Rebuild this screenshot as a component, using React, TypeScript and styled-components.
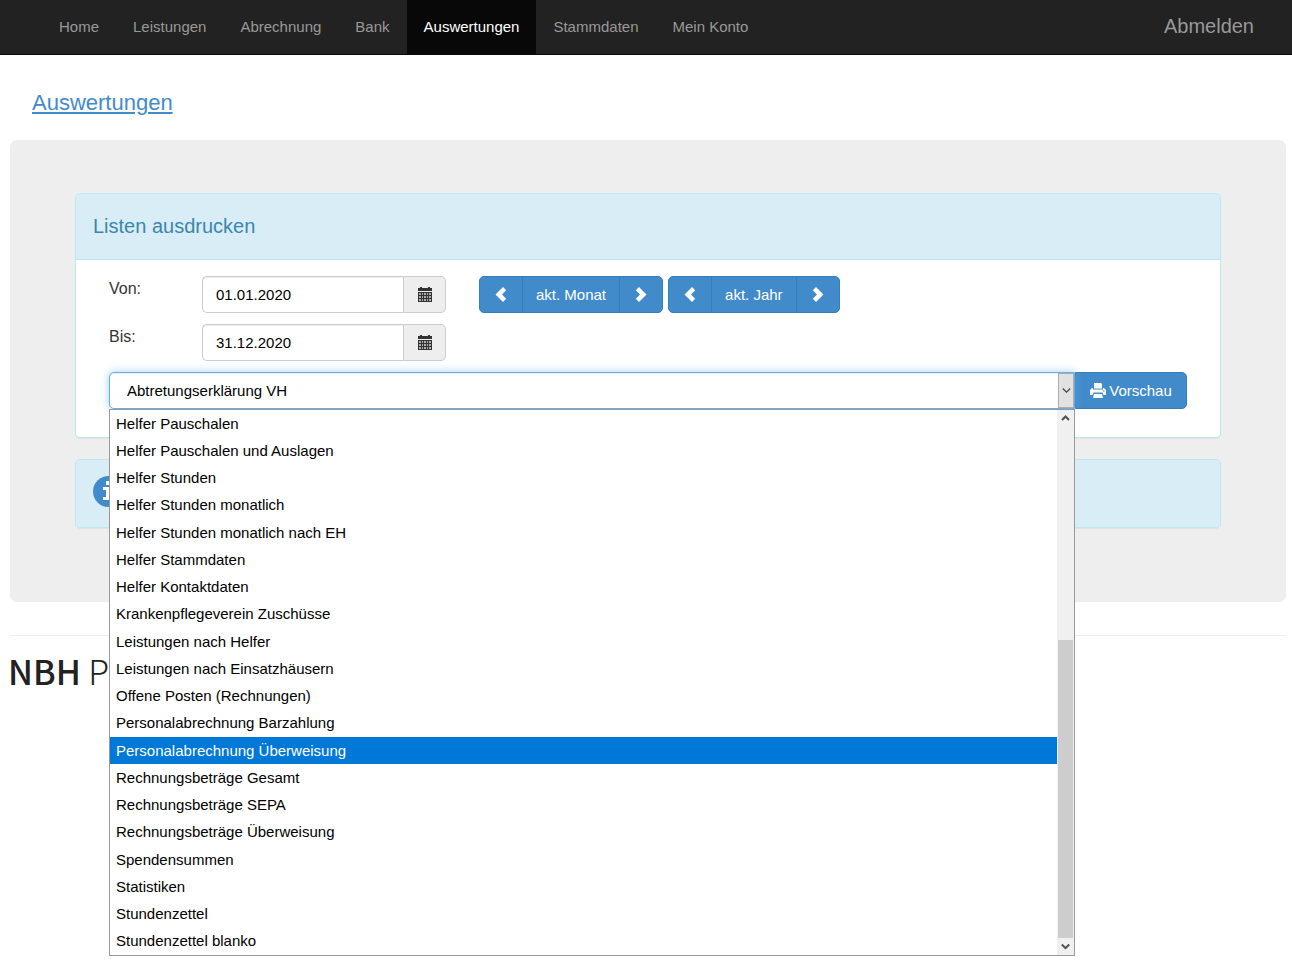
import React from "react";
import styled, { createGlobalStyle, css } from "styled-components";

const GlobalStyle = createGlobalStyle`
  *, *::before, *::after { box-sizing: border-box; }
  body {
    margin: 0;
    min-height: 100vh;
    background: #fff;
    color: #333;
    font-family: "Liberation Sans", Arial, sans-serif;
    font-size: 15px;
    line-height: 22px;
  }
  button, input, select { font-family: inherit; font-size: inherit; }
`;

const Shell = styled.div`
  min-height: 100vh;
`;

const NavBar = styled.nav`
  display: flex;
  justify-content: space-between;
  height: 55px;
  padding: 0 38px 0 42px;
  background: #222;
  border-bottom: 1px solid #080808;
`;

const NavList = styled.ul`
  display: flex;
  margin: 0;
  padding: 0;
  list-style: none;
`;

const NavLink = styled.a<{ $active?: boolean }>`
  display: block;
  padding: 16px 17px;
  color: ${(p) => (p.$active ? "#fff" : "#999")};
  background: ${(p) => (p.$active ? "#080808" : "transparent")};
  text-decoration: none;
`;

const Logout = styled.a`
  padding: 15px 0;
  color: #999;
  font-size: 20px;
  text-decoration: none;
`;

const Page = styled.div`
  padding: 0 6px 0 10px;
`;

const PageTitle = styled.h1`
  margin: 0;
  padding: 35px 22px 24px;
  font-size: 22px;
  font-weight: 400;
  line-height: 26px;
  a { color: #428bca; text-decoration: underline; }
`;

const Jumbotron = styled.main`
  padding: 53px 65px 74px;
  background: #eee;
  border-radius: 7px;
`;

const Panel = styled.section`
  background: #fff;
  border: 1px solid #bce8f1;
  border-radius: 5px;
  box-shadow: 0 1px 1px rgba(0, 0, 0, 0.05);
  & + & { margin-top: 21px; }
`;

const PanelHeading = styled.h2`
  margin: 0;
  padding: 21px 17px;
  color: #3a87ad;
  background: #d9edf7;
  border-bottom: 1px solid #bce8f1;
  border-radius: 4px 4px 0 0;
  font-size: 20px;
  font-weight: 400;
  line-height: 23px;
`;

const PanelBody = styled.form`
  display: flex;
  flex-direction: column;
  gap: 11px;
  padding: 16px 33px 28px;
`;

const InfoBox = styled.div`
  height: 67px;
  padding: 16px 17px;
  background: #d9edf7;
  border-radius: 4px;
  svg { display: block; }
`;

const FormRow = styled.div`
  display: flex;
  align-items: flex-start;
`;

const Label = styled.label`
  width: 93px;
  font-size: 16px;
  line-height: 26px;
`;

const DateGroup = styled.div`
  display: flex;
  width: 244px;
  height: 37px;
`;

const DateInput = styled.input`
  flex: 1;
  min-width: 0;
  padding: 0 13px;
  color: #000;
  background: #fff;
  border: 1px solid #ccc;
  border-right: 0;
  border-radius: 5px 0 0 5px;
  box-shadow: inset 0 1px 1px rgba(0, 0, 0, 0.075);
`;

const DateButton = styled.button`
  display: flex;
  align-items: center;
  justify-content: center;
  width: 43px;
  padding: 0;
  color: #333;
  background: #eee;
  border: 1px solid #ccc;
  border-radius: 0 5px 5px 0;
`;

const Steppers = styled.div`
  display: flex;
  gap: 5px;
  margin-left: 33px;
`;

const primary = css`
  display: flex;
  align-items: center;
  justify-content: center;
  height: 37px;
  color: #fff;
  background: #428bca;
  border: 1px solid #357ebd;
`;

const ButtonGroup = styled.div`
  display: flex;
`;

const GroupButton = styled.button<{ $icon?: boolean }>`
  ${primary}
  width: ${(p) => (p.$icon ? "44px" : "auto")};
  padding: 0 ${(p) => (p.$icon ? "0" : "13px")};
  & + & { margin-left: -1px; }
  &:first-child { border-radius: 5px 0 0 5px; }
  &:last-child { border-radius: 0 5px 5px 0; }
`;

const PreviewButton = styled.button`
  ${primary}
  gap: 3px;
  width: 112px;
  padding: 0;
  border-radius: 0 5px 5px 0;
`;

const SelectWrap = styled.div`
  position: relative;
  flex: 1;
`;

const Select = styled.select`
  display: block;
  width: 100%;
  height: 37px;
  padding: 0 17px;
  appearance: none;
  color: #000;
  background: #fff;
  border: 1px solid #66afe9;
  border-radius: 5px 0 0 5px;
  outline: 0;
  box-shadow: inset 0 1px 1px rgba(0, 0, 0, 0.075), 0 0 8px rgba(102, 175, 233, 0.6);
`;

const SelectArrow = styled.span`
  position: absolute;
  top: 1px;
  right: 1px;
  bottom: 1px;
  display: flex;
  align-items: center;
  justify-content: center;
  width: 16px;
  color: #444;
  background: #e1e1e1;
  border: 1px solid #adadad;
  pointer-events: none;
`;

const Menu = styled.div`
  position: absolute;
  z-index: 1;
  top: 100%;
  left: 0;
  right: 0;
  display: flex;
  height: 547px;
  background: #fff;
  border: 1px solid #999;
`;

const OptionList = styled.ul`
  display: flex;
  flex: 1;
  flex-direction: column;
  margin: 0;
  padding: 0;
  list-style: none;
`;

const Option = styled.li<{ $active: boolean }>`
  display: flex;
  flex: 1;
  align-items: center;
  padding: 0 6px;
  color: ${(p) => (p.$active ? "#fff" : "#000")};
  background: ${(p) => (p.$active ? "#0078d7" : "transparent")};
`;

const ScrollBar = styled.div`
  display: flex;
  flex-direction: column;
  width: 17px;
  padding-right: 1px;
  padding-left: 1px;
  color: #505050;
  background: #f0f0f0;
`;

const ScrollArrow = styled.span`
  display: flex;
  align-items: center;
  justify-content: center;
  height: 17px;
`;

const ScrollTrack = styled.div`
  display: flex;
  flex: 1;
  flex-direction: column;
  justify-content: flex-end;
`;

const ScrollThumb = styled.div`
  height: 298px;
  background: #cdcdcd;
`;

const Footer = styled.footer`
  margin-top: 33px;
  padding-top: 12px;
  border-top: 1px solid #eee;
`;

const Logo = styled.div`
  margin-left: -2px;
  color: #222;
  font-family: "Noto Sans CJK SC", "Open Sans", sans-serif;
  font-size: 34px;
  font-weight: 300;
  line-height: 46px;
  white-space: pre;
  strong { font-weight: 500; }
`;

const navItems = ["Home", "Leistungen", "Abrechnung", "Bank", "Auswertungen", "Stammdaten", "Mein Konto"];

const reports = [
  "Helfer Pauschalen",
  "Helfer Pauschalen und Auslagen",
  "Helfer Stunden",
  "Helfer Stunden monatlich",
  "Helfer Stunden monatlich nach EH",
  "Helfer Stammdaten",
  "Helfer Kontaktdaten",
  "Krankenpflegeverein Zuschüsse",
  "Leistungen nach Helfer",
  "Leistungen nach Einsatzhäusern",
  "Offene Posten (Rechnungen)",
  "Personalabrechnung Barzahlung",
  "Personalabrechnung Überweisung",
  "Rechnungsbeträge Gesamt",
  "Rechnungsbeträge SEPA",
  "Rechnungsbeträge Überweisung",
  "Spendensummen",
  "Statistiken",
  "Stundenzettel",
  "Stundenzettel blanko",
];

const CalendarIcon = () => (
  <svg width="14" height="15" viewBox="0 0 14 15" fill="currentColor" aria-hidden="true">
    <path d="M0 1h2V0h2v1h6V0h2v1h2v3H0z" />
    <path opacity=".35" d="M0 5h14v10H0z" />
    <path
      fillRule="evenodd"
      d="M0 5h14v10H0zM1 6v2h2V6zm3 0v2h1V6zm2 0v2h2V6zm3 0v2h1V6zm2 0v2h2V6zM1 9v2h2V9zm3 0v2h1V9zm2 0v2h2V9zm3 0v2h1V9zm2 0v2h2V9zM1 12v2h2v-2zm3 0v2h1v-2zm2 0v2h2v-2zm3 0v2h1v-2zm2 0v2h2v-2z"
    />
  </svg>
);

const Chevron = ({ right = false }: { right?: boolean }) => (
  <svg width="12" height="15" viewBox="0 0 12 15" fill="currentColor" aria-hidden="true">
    <path d={right ? "M4 0 11.5 7.5 4 15 .8 11.8 5 7.5.8 3.2z" : "M8 0 .5 7.5 8 15l3.2-3.2L7 7.5l4.2-4.3z"} />
  </svg>
);

const PrintIcon = () => (
  <svg width="16" height="16" viewBox="0 0 16 16" fill="currentColor" aria-hidden="true">
    <path d="M4 0h7l1 1v4.500H4z" />
    <path fillRule="evenodd" d="M2 5h1v1.500h10V5h1l2 2v5h-2.500l-1-2.500h-9L2.500 12H0V7zm11 2.500v1h1.500v-1z" />
    <path d="M4 11h8l1 4H3z" />
  </svg>
);

const InfoIcon = () => (
  <svg width="31" height="31" viewBox="0 0 31 31" aria-hidden="true">
    <circle cx="15.500" cy="15.500" r="15.500" fill="#428bca" />
    <path fill="#fff" d="M13 5h6v4h-6zM10 11h9v10h2.500v3H10v-3h3v-7h-3z" />
  </svg>
);

const Caret = ({ up = false, bold = false }: { up?: boolean; bold?: boolean }) => (
  <svg width="9" height="7" viewBox="0 0 9 7" fill="none" stroke="currentColor" strokeWidth={bold ? 2 : 1.2} aria-hidden="true">
    <path d={up ? "M1 5 4.500 1.500 8 5" : "M.8 1.500 4.500 5.200 8.200 1.500"} />
  </svg>
);

const DateRow = ({ id, label, value, children }: { id: string; label: string; value: string; children?: React.ReactNode }) => (
  <FormRow>
    <Label htmlFor={id}>{label}</Label>
    <DateGroup>
      <DateInput id={id} type="text" defaultValue={value} />
      <DateButton type="button" aria-label={`${label} Kalender`}>
        <CalendarIcon />
      </DateButton>
    </DateGroup>
    {children}
  </FormRow>
);

const Stepper = ({ label }: { label: string }) => (
  <ButtonGroup>
    <GroupButton type="button" $icon aria-label="Zurück">
      <Chevron />
    </GroupButton>
    <GroupButton type="button">{label}</GroupButton>
    <GroupButton type="button" $icon aria-label="Weiter">
      <Chevron right />
    </GroupButton>
  </ButtonGroup>
);

export default function App() {
  return (
    <Shell>
      <GlobalStyle />
      <NavBar>
        <NavList>
          {navItems.map((item) => (
            <li key={item}>
              <NavLink href="#" $active={item === "Auswertungen"}>
                {item}
              </NavLink>
            </li>
          ))}
        </NavList>
        <Logout href="#">Abmelden</Logout>
      </NavBar>
      <Page>
        <PageTitle>
          <a href="#">Auswertungen</a>
        </PageTitle>
        <Jumbotron>
          <Panel>
            <PanelHeading>Listen ausdrucken</PanelHeading>
            <PanelBody>
              <DateRow id="von" label="Von:" value="01.01.2020">
                <Steppers>
                  <Stepper label="akt. Monat" />
                  <Stepper label="akt. Jahr" />
                </Steppers>
              </DateRow>
              <DateRow id="bis" label="Bis:" value="31.12.2020" />
              <FormRow>
                <SelectWrap>
                  <Select aria-label="Liste" defaultValue="Abtretungserklärung VH">
                    <option>Abtretungserklärung VH</option>
                    {reports.map((r) => (
                      <option key={r}>{r}</option>
                    ))}
                  </Select>
                  <SelectArrow>
                    <Caret />
                  </SelectArrow>
                  <Menu>
                    <OptionList role="listbox" aria-label="Listen">
                      {reports.map((r) => {
                        const active = r === "Personalabrechnung Überweisung";
                        return (
                          <Option key={r} role="option" aria-selected={active} $active={active}>
                            {r}
                          </Option>
                        );
                      })}
                    </OptionList>
                    <ScrollBar>
                      <ScrollArrow>
                        <Caret up bold />
                      </ScrollArrow>
                      <ScrollTrack>
                        <ScrollThumb />
                      </ScrollTrack>
                      <ScrollArrow>
                        <Caret bold />
                      </ScrollArrow>
                    </ScrollBar>
                  </Menu>
                </SelectWrap>
                <PreviewButton type="button">
                  <PrintIcon />
                  Vorschau
                </PreviewButton>
              </FormRow>
            </PanelBody>
          </Panel>
          <Panel>
            <InfoBox>
              <InfoIcon />
            </InfoBox>
          </Panel>
        </Jumbotron>
        <Footer>
          <Logo>
            <strong>NBH</strong> Pl
          </Logo>
        </Footer>
      </Page>
    </Shell>
  );
}
